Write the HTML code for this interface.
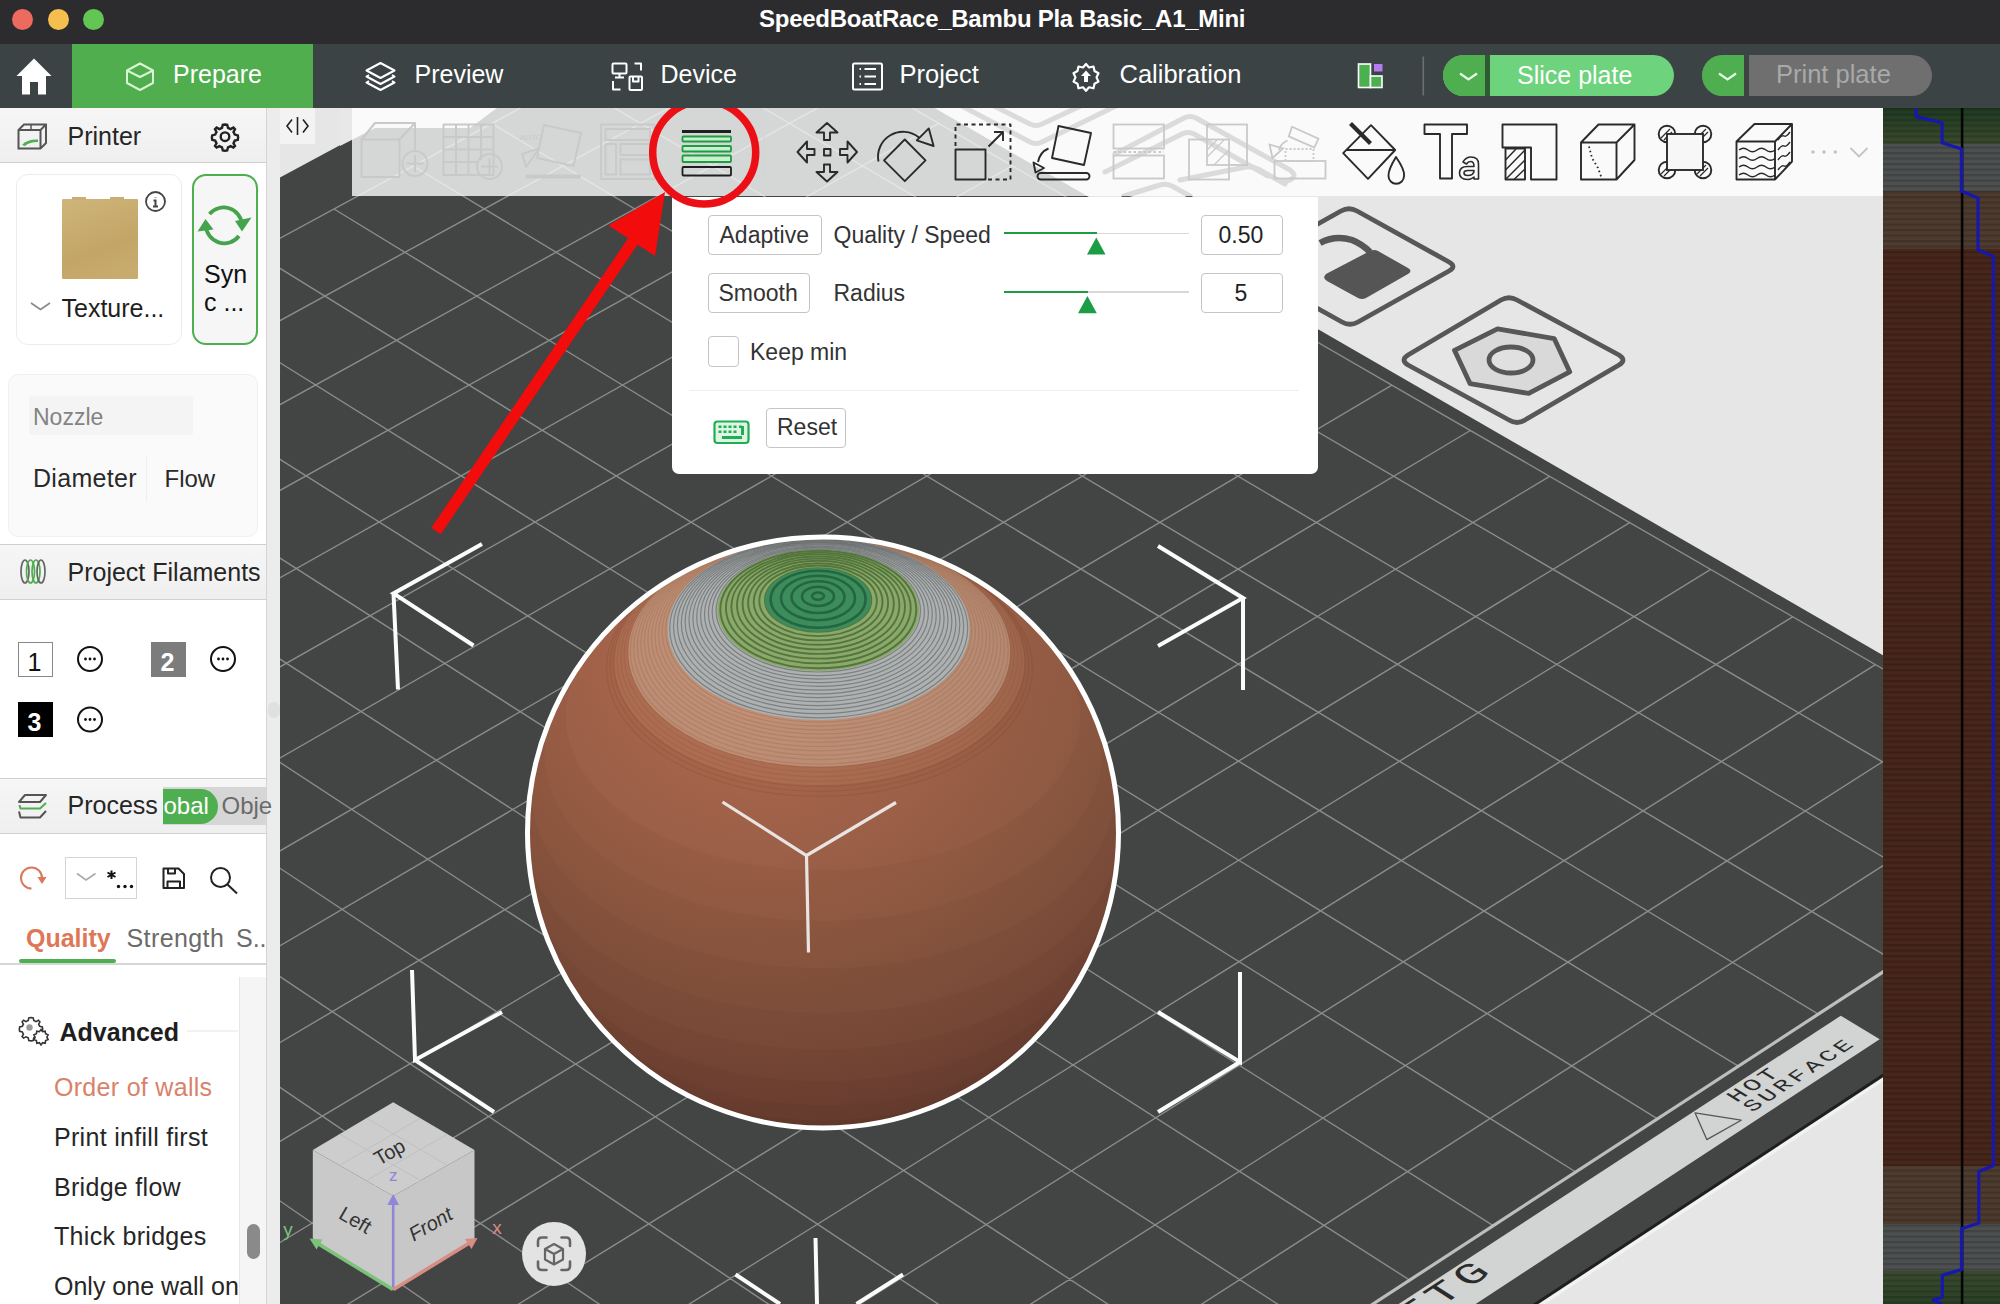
<!DOCTYPE html>
<html><head><meta charset="utf-8"><style>
*{box-sizing:border-box;margin:0;padding:0}
html,body{width:2000px;height:1304px;overflow:hidden;background:#e6e6e6;font-family:"Liberation Sans", sans-serif}
.a{position:absolute}
.t{position:absolute;white-space:nowrap;line-height:1}
svg{overflow:visible}
</style></head><body>

<svg class="a" style="left:0;top:0" width="2000" height="1304" viewBox="0 0 2000 1304">
<defs><clipPath id="vp"><rect x="280" y="108" width="1603" height="1196"/></clipPath></defs>
<g clip-path="url(#vp)">
<rect x="280" y="108" width="1603" height="1196" fill="#e6e6e6"/>
<polygon points="681.0,-38.3 2223.3,851.5 602.6,1917.9 -914.5,820.2" fill="#434444"/>
<path d="M722.6 -1.6L2129.6 811.5M646.3 39.7L2053.0 861.4M569.4 81.4L1975.6 911.7M491.7 123.5L1897.4 962.7M413.2 166.0L1818.3 1014.1M334.0 209.0L1738.3 1066.2M254.0 252.3L1657.5 1118.8M173.2 296.1L1575.8 1172.0M91.5 340.3L1493.2 1225.7M9.1 385.0L1409.7 1280.1M-74.1 430.1L1325.3 1335.0M-158.2 475.7L1239.9 1390.6M-243.2 521.7L1153.6 1446.8M-329.0 568.2L1066.2 1503.7M-415.7 615.2L977.9 1561.2M-503.3 662.6L888.6 1619.3M-591.8 710.6L798.2 1678.1M-681.3 759.0L706.8 1737.6M-771.6 808.0L614.4 1797.8M722.6 -1.6L-771.6 808.0M793.9 39.6L-702.0 857.7M865.9 81.2L-631.7 908.0M938.7 123.3L-560.5 958.8M1012.2 165.8L-488.5 1010.2M1086.5 208.7L-415.7 1062.2M1161.7 252.2L-342.0 1114.8M1237.6 296.0L-267.4 1168.1M1314.3 340.4L-192.0 1222.0M1391.9 385.2L-115.7 1276.5M1470.3 430.5L-38.4 1331.6M1549.6 476.3L39.7 1387.5M1629.7 522.6L118.8 1443.9M1710.7 569.4L198.9 1501.1M1792.6 616.8L280.0 1559.0M1875.4 664.6L362.0 1617.6M1959.2 713.0L445.1 1676.9M2043.9 762.0L529.2 1737.0" stroke="#8a8b8b" stroke-width="1.4" fill="none"/>
<path d="M2129.6 811.5L614.4 1797.8" stroke="#bdbdbd" stroke-width="3.2"/>
<polygon points="1840.8,1015.7 1879.7,1039.2 940.3,1654.9 901.5,1628.2" fill="#d2d3d3"/>
<g transform="matrix(0.8069,-0.5272,0.8653,0.5304,1736.53,1102.72)"><text x="0" y="0" font-family="Liberation Mono" font-size="21" letter-spacing="2.6" fill="#2b2b2b" transform="scale(1.25,1)">HOT</text></g><g transform="matrix(0.8069,-0.5283,0.8672,0.5316,1752.30,1112.49)"><text x="0" y="0" font-family="Liberation Mono" font-size="20" letter-spacing="2.9" fill="#2b2b2b" transform="scale(1.25,1)">SURFACE</text></g><g transform="matrix(0.8465,-0.5536,0.8658,0.5579,1386.16,1342.41)"><text x="0" y="0" font-family="Liberation Mono" font-size="36" letter-spacing="4.6" fill="#2b2b2b" transform="scale(1.25,1)">PETG</text></g><polygon points="1695.0,1112.8 1706.8,1139.6 1741.2,1120.2" fill="none" stroke="#555" stroke-width="1.3" stroke-linejoin="round"/>
<path d="M2225.5 852.8L604.8 1919.5" stroke="#f2f2f2" stroke-width="5.5"/>
<path d="M2223.3 851.5L602.6 1917.9" stroke="#1e1f1f" stroke-width="3"/>

<defs>
 <radialGradient id="sg" cx="760" cy="640" r="560" gradientUnits="userSpaceOnUse">
  <stop offset="0" stop-color="#b56c4f"/>
  <stop offset="0.35" stop-color="#9e6048"/>
  <stop offset="0.7" stop-color="#87563f"/>
  <stop offset="1" stop-color="#6e4839"/>
 </radialGradient>
 <clipPath id="sc"><circle cx="823" cy="832.5" r="295.5"/></clipPath>
</defs>
<circle cx="823" cy="832.5" r="295.5" fill="url(#sg)"/>
<g clip-path="url(#sc)">
<path d="M1055.9 650.6 A257.2 154.3 0 1 1 590.1 650.6 A295.5 295.5 0 1 0 1055.9 650.6 Z" fill="rgba(40,15,5,0.032)"/><path d="M1091.5 709.2 A278.6 167.1 0 1 1 554.5 709.2 A295.5 295.5 0 1 0 1091.5 709.2 Z" fill="rgba(40,15,5,0.032)"/><path d="M1112.1 771.5 A291.4 174.9 0 1 1 533.9 771.5 A295.5 295.5 0 1 0 1112.1 771.5 Z" fill="rgba(40,15,5,0.032)"/><path d="M1118.5 835.7 A295.5 177.3 0 0 1 527.5 835.7 A295.5 295.5 0 0 0 1118.5 835.7 Z" fill="rgba(40,15,5,0.032)"/><path d="M1110.7 899.8 A290.6 174.3 0 0 1 535.3 899.8 A295.5 295.5 0 0 0 1110.7 899.8 Z" fill="rgba(40,15,5,0.032)"/><path d="M1088.7 961.9 A276.8 166.1 0 0 1 557.3 961.9 A295.5 295.5 0 0 0 1088.7 961.9 Z" fill="rgba(40,15,5,0.032)"/><path d="M1051.4 1020.0 A254.6 152.8 0 0 1 594.6 1020.0 A295.5 295.5 0 0 0 1051.4 1020.0 Z" fill="rgba(40,15,5,0.032)"/><path d="M995.5 1072.4 A224.7 134.8 0 0 1 650.5 1072.4 A295.5 295.5 0 0 0 995.5 1072.4 Z" fill="rgba(40,15,5,0.032)"/><path d="M901.0 1117.5 A188.0 112.8 0 0 1 745.0 1117.5 A295.5 295.5 0 0 0 901.0 1117.5 Z" fill="rgba(40,15,5,0.032)"/>
<ellipse cx="819.5" cy="668.6" rx="213.0" ry="127.8" fill="none" stroke="rgba(120,70,45,0.22)" stroke-width="1.2"/><ellipse cx="819.5" cy="665.7" rx="209.4" ry="125.6" fill="none" stroke="rgba(120,70,45,0.22)" stroke-width="1.2"/><ellipse cx="819.4" cy="662.9" rx="205.8" ry="123.5" fill="none" stroke="rgba(120,70,45,0.22)" stroke-width="1.2"/><ellipse cx="819.4" cy="660.1" rx="202.2" ry="121.3" fill="none" stroke="rgba(120,70,45,0.22)" stroke-width="1.2"/><ellipse cx="819.3" cy="657.5" rx="198.6" ry="119.2" fill="none" stroke="rgba(120,70,45,0.22)" stroke-width="1.2"/><ellipse cx="819.2" cy="654.9" rx="195.0" ry="117.0" fill="none" stroke="rgba(120,70,45,0.22)" stroke-width="1.2"/><ellipse cx="819.2" cy="652.4" rx="191.4" ry="114.8" fill="none" stroke="rgba(120,70,45,0.22)" stroke-width="1.2"/>
<ellipse cx="819.4" cy="662.2" rx="205.0" ry="123.0" fill="rgba(220,170,130,0.12)"/><ellipse cx="819.2" cy="652.1" rx="191.0" ry="114.6" fill="rgba(215,200,180,0.36)"/><ellipse cx="819.2" cy="650.8" rx="189.0" ry="113.4" fill="none" stroke="rgba(150,100,70,0.3)" stroke-width="1.3"/><ellipse cx="819.1" cy="648.4" rx="185.4" ry="111.2" fill="none" stroke="rgba(150,100,70,0.3)" stroke-width="1.3"/><ellipse cx="819.1" cy="646.1" rx="181.8" ry="109.1" fill="none" stroke="rgba(150,100,70,0.3)" stroke-width="1.3"/><ellipse cx="819.0" cy="643.9" rx="178.2" ry="106.9" fill="none" stroke="rgba(150,100,70,0.3)" stroke-width="1.3"/><ellipse cx="819.0" cy="641.8" rx="174.6" ry="104.8" fill="none" stroke="rgba(150,100,70,0.3)" stroke-width="1.3"/><ellipse cx="818.9" cy="639.7" rx="171.0" ry="102.6" fill="none" stroke="rgba(150,100,70,0.3)" stroke-width="1.3"/><ellipse cx="818.9" cy="637.7" rx="167.4" ry="100.4" fill="none" stroke="rgba(150,100,70,0.3)" stroke-width="1.3"/><ellipse cx="818.8" cy="635.7" rx="163.8" ry="98.3" fill="none" stroke="rgba(150,100,70,0.3)" stroke-width="1.3"/><ellipse cx="818.8" cy="633.9" rx="160.2" ry="96.1" fill="none" stroke="rgba(150,100,70,0.3)" stroke-width="1.3"/><ellipse cx="818.8" cy="632.0" rx="156.6" ry="94.0" fill="none" stroke="rgba(150,100,70,0.3)" stroke-width="1.3"/><ellipse cx="818.7" cy="630.3" rx="153.0" ry="91.8" fill="none" stroke="rgba(150,100,70,0.3)" stroke-width="1.3"/><ellipse cx="818.7" cy="629.3" rx="151.0" ry="90.6" fill="#aeb1b1"/><ellipse cx="818.7" cy="628.4" rx="149.0" ry="89.4" fill="none" stroke="rgba(90,95,95,0.6)" stroke-width="1.2"/><ellipse cx="818.6" cy="626.6" rx="145.1" ry="87.1" fill="none" stroke="rgba(90,95,95,0.6)" stroke-width="1.2"/><ellipse cx="818.6" cy="624.8" rx="141.2" ry="84.7" fill="none" stroke="rgba(90,95,95,0.6)" stroke-width="1.2"/><ellipse cx="818.6" cy="623.2" rx="137.3" ry="82.4" fill="none" stroke="rgba(90,95,95,0.6)" stroke-width="1.2"/><ellipse cx="818.5" cy="621.6" rx="133.4" ry="80.0" fill="none" stroke="rgba(90,95,95,0.6)" stroke-width="1.2"/><ellipse cx="818.5" cy="620.0" rx="129.5" ry="77.7" fill="none" stroke="rgba(90,95,95,0.6)" stroke-width="1.2"/><ellipse cx="818.5" cy="618.5" rx="125.6" ry="75.4" fill="none" stroke="rgba(90,95,95,0.6)" stroke-width="1.2"/><ellipse cx="818.4" cy="617.1" rx="121.7" ry="73.0" fill="none" stroke="rgba(90,95,95,0.6)" stroke-width="1.2"/><ellipse cx="818.4" cy="615.7" rx="117.8" ry="70.7" fill="none" stroke="rgba(90,95,95,0.6)" stroke-width="1.2"/><ellipse cx="818.4" cy="614.4" rx="113.9" ry="68.3" fill="none" stroke="rgba(90,95,95,0.6)" stroke-width="1.2"/><ellipse cx="818.4" cy="613.1" rx="110.0" ry="66.0" fill="none" stroke="rgba(90,95,95,0.6)" stroke-width="1.2"/><ellipse cx="818.3" cy="611.9" rx="106.1" ry="63.7" fill="none" stroke="rgba(90,95,95,0.6)" stroke-width="1.2"/><ellipse cx="818.3" cy="610.7" rx="102.2" ry="61.3" fill="none" stroke="rgba(90,95,95,0.6)" stroke-width="1.2"/><ellipse cx="818.3" cy="610.3" rx="101.0" ry="60.6" fill="#8aa96a"/><ellipse cx="818.3" cy="609.5" rx="98.0" ry="58.8" fill="none" stroke="rgba(70,105,50,0.8)" stroke-width="1.9"/><ellipse cx="818.3" cy="608.0" rx="92.4" ry="55.4" fill="none" stroke="rgba(70,105,50,0.8)" stroke-width="1.9"/><ellipse cx="818.2" cy="606.5" rx="86.8" ry="52.1" fill="none" stroke="rgba(70,105,50,0.8)" stroke-width="1.9"/><ellipse cx="818.2" cy="605.2" rx="81.2" ry="48.7" fill="none" stroke="rgba(70,105,50,0.8)" stroke-width="1.9"/><ellipse cx="818.2" cy="604.0" rx="75.6" ry="45.4" fill="none" stroke="rgba(70,105,50,0.8)" stroke-width="1.9"/><ellipse cx="818.1" cy="602.8" rx="70.0" ry="42.0" fill="none" stroke="rgba(70,105,50,0.8)" stroke-width="1.9"/><ellipse cx="818.1" cy="601.8" rx="64.4" ry="38.6" fill="none" stroke="rgba(70,105,50,0.8)" stroke-width="1.9"/><ellipse cx="818.1" cy="600.8" rx="58.8" ry="35.3" fill="none" stroke="rgba(70,105,50,0.8)" stroke-width="1.9"/><ellipse cx="818.1" cy="600.0" rx="53.2" ry="31.9" fill="none" stroke="rgba(70,105,50,0.8)" stroke-width="1.9"/><ellipse cx="818.1" cy="599.9" rx="53.0" ry="31.8" fill="#3d8d5c"/><ellipse cx="818.1" cy="599.2" rx="47.5" ry="28.5" fill="none" stroke="rgba(30,95,60,0.85)" stroke-width="2.6"/><ellipse cx="818.0" cy="598.0" rx="37.0" ry="22.2" fill="none" stroke="rgba(30,95,60,0.85)" stroke-width="2.6"/><ellipse cx="818.0" cy="597.1" rx="26.5" ry="15.9" fill="none" stroke="rgba(30,95,60,0.85)" stroke-width="2.6"/><ellipse cx="818.0" cy="596.4" rx="16.0" ry="9.6" fill="none" stroke="rgba(30,95,60,0.85)" stroke-width="2.6"/><ellipse cx="818.0" cy="596.1" rx="6.0" ry="3.6" fill="none" stroke="rgba(30,95,60,0.85)" stroke-width="2.6"/>
</g>
<circle cx="823" cy="832.5" r="295.5" fill="none" stroke="#fff" stroke-width="5"/>


<g fill="none" stroke="#575757" stroke-width="4.8" stroke-linejoin="round">
 <path d="M1341 211 Q1349 206.5 1357 211 L1449 262 Q1457 266.5 1449 271 L1358 322 Q1350 326.5 1342 322 L1250 271 Q1242 266.5 1250 262 Z"/>
 <path d="M1405 300 Q1513 296 1513 296 Q1517 294 1521 296 L1619 354 Q1627 359 1619 364 L1525 420 Q1517 425 1509 420 L1408 365 Q1400 360 1408 355 L1501 300 Q1509 295.5 1517 300" stroke="none"/>
 <path d="M1501 300 Q1509 295.5 1517 300 L1619 355 Q1627 360 1619 365 L1525 420 Q1517 425 1509 420 L1408 365 Q1400 360 1408 355 Z"/>
 <path d="M1454.5 350.3 L1497.5 328.8 L1554.2 338.6 L1569.8 371.9 L1528.7 393.4 L1470 383.6 Z" fill="#d9d9d9"/>
 <ellipse cx="1511" cy="360" rx="22" ry="13" fill="#e0e0e0"/>
 <path d="M1320 243 Q1335 235 1352 240 Q1362 244 1370 252" stroke-width="6.5"/>
</g>
<path d="M1326 274 L1370 251 Q1374 249 1378 251 L1408 268 Q1413 271 1408 274 L1366 298 Q1362 300 1358 298 L1327 281 Q1322 278 1326 274 Z" fill="#555"/>
<g fill="none" stroke="#5a5a5a" stroke-width="5" stroke-linejoin="round" stroke-linecap="round">
 <path d="M958 104 L1030 142 Q1036 145 1042 142 L1120 104"/>
 <path d="M990 104 L1030 124 Q1036 127 1042 124 L1085 104"/>
 <path d="M1115 154 L1184 118 Q1190 115 1196 118 L1290 170 Q1298 176 1290 180 L1282 182"/>
 <path d="M1105 172 L1182 134 Q1188 131 1194 134 L1268 176"/>
 <path d="M1180 180 L1246 167 Q1252 166 1258 169 L1285 184"/>
 <path d="M1124 196 L1160 185 Q1166 183 1172 186 L1190 196"/>
 <path d="M1142 104 L1190 104"/>
</g>
<path d="M340 108 L497 108 L470 128 L375 128 L340 146 Z" fill="#e8e8e8"/>


<g stroke="#fbfbfb" stroke-width="4" fill="none" stroke-linecap="butt">
 <path d="M482 544 L393.5 593.5 L473.5 645.5 M393.5 593.5 L398 689.5"/>
 <path d="M1158 546 L1243 598 L1158 646 M1243 598 L1243 690"/>
 <path d="M412 970 L415 1060 L502 1012 M415 1060 L494 1112"/>
 <path d="M1240 972 L1240 1062 L1158 1012 M1240 1062 L1158 1112"/>
 <path d="M815.5 1238 L817 1304 M735.5 1274.5 L780 1304 M903 1274.5 L856.5 1304"/>
</g>
<path d="M722.5 802 L806.5 855.5 L896 802.5 M806.5 855.5 L808.5 952.5" stroke="#e9e4e2" stroke-width="3.2" fill="none"/>

</g>
</svg>


<div class="a" style="left:352px;top:108px;width:1531px;height:88px;background:rgba(255,255,255,0.78)"></div>
<div class="a" style="left:280px;top:108px;width:35px;height:36px;background:#f3f3f3"></div>
<svg class="a" style="left:0;top:0" width="2000" height="200">
 <path d="M297.5 117 V135" stroke="#222" stroke-width="1.6"/>
 <path d="M292 119.5 L287 126 L292 132.5 M303 119.5 L308 126 L303 132.5" fill="none" stroke="#222" stroke-width="1.6"/>
 <g fill="none" stroke="#c9c9c9" stroke-width="2" stroke-linejoin="round">
  <path d="M361.5 139.5 H399.5 V177 H361.5 Z M361.5 139.5 L375 123 H415 L399.5 139.5 M415 123 V151"/>
  <circle cx="415" cy="163.5" r="12.5"/><path d="M415 155 V172 M406.5 163.5 H423.5"/>
  <path d="M443.5 124.5 H493.5 V175 H443.5 Z M456 124.5 V175 M468.5 124.5 V175 M481 124.5 V160 M443.5 137 H493.5 M443.5 149.5 H493.5 M443.5 162 H478"/>
  <circle cx="489.5" cy="166.5" r="12.5"/><path d="M489.5 158 V175 M481 166.5 H498"/>
  <path d="M544 125 L581 133 L573.5 166 L537 158 Z"/><path d="M527.5 176.5 H579" stroke-width="4" stroke-linecap="round"/>
  <path d="M522 154 L539 148.5 L526 167 Z"/>
  <path d="M601 124.5 H654.5 V179 H601 Z M605.5 129 H650 V140 H605.5 Z M605.5 144 H616 V174.5 H605.5 Z M620.5 144 H650 V155 H620.5 Z M620.5 159.5 H650 V174.5 H620.5 Z" stroke-width="1.8"/>
 </g>
 <text x="520" y="140" font-size="8" fill="#c9c9c9" font-family="Liberation Sans">AUTO</text>
 <path d="M682 131.5 H731" stroke="#1f1f1f" stroke-width="3.2"/>
 <g fill="#c8f0cc" stroke="#1c9c43" stroke-width="1.8">
  <rect x="682.5" y="136.5" width="48.5" height="5" rx="1"/>
  <rect x="682.5" y="146" width="48.5" height="5.5" rx="1"/>
  <rect x="682.5" y="155.5" width="48.5" height="6.5" rx="1"/>
 </g>
 <rect x="682.5" y="167" width="48.5" height="8.5" rx="1" fill="none" stroke="#1f1f1f" stroke-width="1.8"/>
 <path d="M764.5 130 V176" stroke="#d4d4d4" stroke-width="1.2"/>
 <g fill="none" stroke="#2a2a2a" stroke-width="1.9" stroke-linejoin="round">
  <path d="M827 123 L837.5 132.5 H830 V140 H824 V132.5 H816.5 Z"/>
  <path d="M827 181.5 L837.5 172 H830 V164.5 H824 V172 H816.5 Z"/>
  <path d="M797.5 152 L807 141.5 V149 H814.5 V155 H807 V162.5 Z"/>
  <path d="M857 152 L847.5 141.5 V149 H840 V155 H847.5 V162.5 Z"/>
  <rect x="824" y="149" width="6.5" height="6.5"/>
  <path d="M904.8 139.5 L925.5 160.4 L904.8 181.2 L884 160.4 Z"/>
  <path d="M878.5 161.5 A 25 25 0 0 1 919 137.5"/>
  <path d="M916.8 140.4 L928.8 128.4 L933.6 146 Z"/>
  <path d="M955.5 149.5 H985.5 V179.5 H955.5 Z"/>
  <path d="M955.5 146 V124.5 H1010.5 V179.5 H988" stroke-dasharray="4 3.5"/>
  <path d="M988.5 146.5 L1002.5 132.5 M994 132 H1003 V141"/>
  <path d="M1058.5 126 L1091 133 L1084 165 L1052 158 Z"/>
  <path d="M1048.5 148.5 Q1040 152 1038 162"/>
  <path d="M1033.5 162.5 L1044 168 L1035.5 172.5 Z"/>
  <rect x="1037.5" y="173" width="52" height="6.5" rx="3.2"/>
 </g>
 <g fill="none" stroke="#c9c9c9" stroke-width="1.8">
  <rect x="1113.5" y="124.5" width="50.5" height="24"/><rect x="1113.5" y="155.5" width="50.5" height="23"/>
  <path d="M1113.5 152 H1164" stroke-dasharray="2.5 2.5"/>
  <rect x="1189" y="139.5" width="40" height="40"/><rect x="1207" y="124.5" width="40" height="40.5"/>
  <path d="M1207 157 L1224 140 M1207 150 L1217 140 M1214 165 L1229 150" stroke-width="1.2"/>
  <rect x="1274.5" y="161" width="51" height="17.5"/><rect x="1285.5" y="149" width="28" height="12" stroke-dasharray="2 2"/>
  <path d="M1292 126.8 L1318.4 138.8 L1314.4 147.6 L1288.8 136.4 Z"/>
  <path d="M1287.5 140.5 Q1280 144 1279 150"/><path d="M1269.5 144.5 L1283 148.5 L1272.5 158 Z"/>
 </g>
 <g fill="none" stroke="#2a2a2a" stroke-width="1.9" stroke-linejoin="round">
  <path d="M1371 125.2 L1395.2 150 L1368 178.8 L1343.2 153.2 Z M1346 150 H1395.2"/>
  <path d="M1396 157 Q1405 170 1404 176 A 7.5 7.5 0 0 1 1388.5 176 Q1388 170 1396 157 Z"/>
 </g>
 <path d="M1350.5 123.5 L1370.5 143.5" stroke="#2a2a2a" stroke-width="4.2"/>
 <g fill="none" stroke="#2a2a2a" stroke-width="1.9" stroke-linejoin="round">
  <path d="M1424.5 124.5 H1467 V134 H1452 V178.5 H1440 V134 H1424.5 Z"/>
  <path d="M1463 162 Q1466 157 1471 157 Q1478.5 157 1478.5 164 V179 H1474 V177 Q1471 179.5 1467.5 179.5 Q1459.5 179.5 1459.5 173 Q1459.5 166.5 1467.5 166.5 H1474 Q1474 161.5 1470.5 161.5 Q1468 161.5 1466.5 164 Z M1474 170.5 H1468 Q1464 170.5 1464 173 Q1464 175.5 1467.5 175.5 Q1474 175.5 1474 170.5 Z" stroke-width="1.6"/>
  <path d="M1502.5 124.5 H1556.5 V179.5 H1531 V147.5 H1502.5 Z"/>
  <rect x="1505.5" y="148.5" width="19.5" height="31" />
  <path d="M1505.5 160 L1516 149 M1505.5 170 L1525 150 M1505.5 179.5 L1525 160 M1514 179.5 L1525 169" stroke-width="1.5"/>
  <path d="M1581 142.5 H1616.5 V179.5 H1581 Z M1581 142.5 L1598.5 124.5 H1634.5 L1616.5 142.5 M1634.5 124.5 V160 L1616.5 179.5"/>
 </g>
 <path d="M1589 146.5 L1592 158 L1598 168 L1602 179" stroke="#2a2a2a" stroke-width="1.8" stroke-dasharray="1.6 2.8" fill="none"/>
 <g fill="none" stroke="#2a2a2a" stroke-width="1.9">
  <circle cx="1667" cy="134" r="8.3"/><circle cx="1703" cy="134" r="8.3"/><circle cx="1667" cy="170" r="8.3"/><circle cx="1703" cy="170" r="8.3"/>
 </g>
 <g stroke="#2a2a2a" stroke-width="1.2">
  <path d="M1661 138 L1670 129 M1664 140 L1672 132 M1697 138 L1706 129 M1700 140 L1708 132 M1661 174 L1670 165 M1664 176 L1672 168 M1697 174 L1706 165 M1700 176 L1708 168"/>
 </g>
 <rect x="1667" y="134" width="36" height="36" fill="#f7f7f7" stroke="#2a2a2a" stroke-width="1.9"/>
 <g fill="none" stroke="#2a2a2a" stroke-width="1.9" stroke-linejoin="round">
  <path d="M1736.5 141.5 H1775 V179.5 H1736.5 Z M1736.5 141.5 L1754.5 124 H1792 L1775 141.5 M1792 124 V161.5 L1775 179.5"/>
 </g>
 <g fill="none" stroke="#2a2a2a" stroke-width="1.4">
  <path d="M1739 150 q4.5 -3.5 9 0 t9 0 t9 0 t9 0 M1739 158.5 q4.5 -3.5 9 0 t9 0 t9 0 t9 0 M1739 167 q4.5 -3.5 9 0 t9 0 t9 0 t9 0 M1739 175 q4.5 -3.5 9 0 t9 0 t9 0 t9 0"/>
  <path d="M1778 140 q4 -5.5 6 -4 t 6 -4 M1778 150 q4 -5.5 6 -4 t 6 -4 M1778 160 q4 -5.5 6 -4 t 6 -4 M1778 170 q4 -5.5 6 -4 t 6 -4"/>
 </g>
 <g fill="#c4c4c4"><circle cx="1813" cy="152" r="1.8"/><circle cx="1824" cy="152" r="1.8"/><circle cx="1835.3" cy="152" r="1.8"/></g>
 <path d="M1850.5 148 L1859 156.5 L1867.5 148" fill="none" stroke="#c4c4c4" stroke-width="1.8"/>
</svg>


<div class="a" style="left:672px;top:197px;width:646px;height:277px;background:#fff;border-radius:0 0 7px 7px"></div>
<div class="a" style="left:707.5px;top:214.5px;width:114px;height:40px;border:1.6px solid #c4c4c4;border-radius:4px"></div>
<div class="t" style="left:719.5px;top:223.5px;font-size:23px;color:#333;font-weight:normal;">Adaptive</div>
<div class="t" style="left:833.5px;top:223.5px;font-size:23px;color:#333;font-weight:normal;">Quality / Speed</div>
<div class="a" style="left:1003.5px;top:232.5px;width:185.5px;height:1.6px;background:#d8d8d8"></div>
<div class="a" style="left:1003.5px;top:232px;width:93px;height:2.2px;background:#1c9c43"></div>
<div class="a" style="left:1200.5px;top:214.5px;width:82px;height:40px;border:1.6px solid #c4c4c4;border-radius:4px"></div>
<div class="t" style="left:1218.5px;top:223.5px;font-size:23px;color:#222;font-weight:normal;">0.50</div>
<div class="a" style="left:707.5px;top:273px;width:102px;height:40px;border:1.6px solid #c4c4c4;border-radius:4px"></div>
<div class="t" style="left:718.5px;top:282.0px;font-size:23px;color:#333;font-weight:normal;">Smooth</div>
<div class="t" style="left:833.5px;top:282.0px;font-size:23px;color:#333;font-weight:normal;">Radius</div>
<div class="a" style="left:1003.5px;top:291.3px;width:185.5px;height:1.6px;background:#d8d8d8"></div>
<div class="a" style="left:1003.5px;top:290.8px;width:84px;height:2.2px;background:#1c9c43"></div>
<div class="a" style="left:1200.5px;top:273px;width:82px;height:40px;border:1.6px solid #c4c4c4;border-radius:4px"></div>
<div class="t" style="left:1234.5px;top:282.0px;font-size:23px;color:#222;font-weight:normal;">5</div>
<div class="a" style="left:707.5px;top:335.5px;width:31.5px;height:31px;border:1.6px solid #c4c4c4;border-radius:4px"></div>
<div class="t" style="left:750px;top:340.5px;font-size:23px;color:#333;font-weight:normal;">Keep min</div>
<div class="a" style="left:689px;top:390px;width:610px;height:1.2px;background:#efefef"></div>
<div class="a" style="left:766px;top:407.5px;width:80px;height:40px;border:1.6px solid #c4c4c4;border-radius:4px"></div>
<div class="t" style="left:777px;top:416.0px;font-size:23px;color:#333;font-weight:normal;">Reset</div>
<svg class="a" style="left:0;top:0" width="2000" height="500">
 <path d="M1096.3 237.5 L1105.5 254.5 L1087 254.5 Z" fill="#1a9d45"/>
 <path d="M1087.4 296 L1096.8 313.3 L1078 313.3 Z" fill="#1a9d45"/>
 <rect x="714.5" y="421.5" width="34" height="21.5" rx="3" fill="#dff5e4" stroke="#1fae55" stroke-width="2.2"/>
 <g fill="#1fae55"><rect x="718.5" y="425.5" width="3" height="2.5"/><rect x="723.5" y="425.5" width="3" height="2.5"/><rect x="728.5" y="425.5" width="3" height="2.5"/><rect x="733.5" y="425.5" width="3" height="2.5"/><rect x="739" y="425.5" width="3" height="2.5"/>
 <rect x="718.5" y="430.5" width="3" height="2.5"/><rect x="723.5" y="430.5" width="3" height="2.5"/><rect x="728.5" y="430.5" width="3" height="2.5"/><rect x="733.5" y="430.5" width="3" height="2.5"/><rect x="741" y="426" width="3" height="9"/>
 <rect x="722" y="436" width="20" height="3"/></g>
</svg>


<svg class="a" style="left:0;top:0" width="2000" height="1304">
 <circle cx="704.2" cy="152.5" r="51.5" fill="none" stroke="#ec1016" stroke-width="7.5"/>
 <path d="M436 531 L640 231" stroke="#f20c0c" stroke-width="11.5" fill="none"/>
 <path d="M665 192 L608.5 225.5 L655 256 Z" fill="#f20c0c"/>
</svg>


<svg class="a" style="left:0;top:0" width="2000" height="1304">
 <defs><linearGradient id="bg0" x1="0" y1="0" x2="0" y2="1"><stop offset="0" stop-color="#1f3a22"/><stop offset="1" stop-color="#3b4a2e"/></linearGradient><linearGradient id="bg1" x1="0" y1="0" x2="0" y2="1"><stop offset="0" stop-color="#4d5050"/><stop offset="1" stop-color="#4d5050"/></linearGradient><linearGradient id="bg2" x1="0" y1="0" x2="0" y2="1"><stop offset="0" stop-color="#4c3a2d"/><stop offset="1" stop-color="#4e3c30"/></linearGradient><linearGradient id="bg3" x1="0" y1="0" x2="0" y2="1"><stop offset="0" stop-color="#47261b"/><stop offset="1" stop-color="#47261b"/></linearGradient><linearGradient id="bg4" x1="0" y1="0" x2="0" y2="1"><stop offset="0" stop-color="#4e3c30"/><stop offset="1" stop-color="#4c3a2d"/></linearGradient><linearGradient id="bg5" x1="0" y1="0" x2="0" y2="1"><stop offset="0" stop-color="#4d5050"/><stop offset="1" stop-color="#4d5050"/></linearGradient><linearGradient id="bg6" x1="0" y1="0" x2="0" y2="1"><stop offset="0" stop-color="#3a4a2e"/><stop offset="1" stop-color="#2a4026"/></linearGradient>
  <pattern id="stripes" x="0" y="108" width="10" height="5.5" patternUnits="userSpaceOnUse"><rect x="0" y="0" width="10" height="2.2" fill="rgba(0,0,0,0.16)"/></pattern>
 </defs>
 <rect x="1883" y="108" width="117" height="36" fill="url(#bg0)"/><rect x="1883" y="144" width="117" height="47" fill="url(#bg1)"/><rect x="1883" y="191" width="117" height="58" fill="url(#bg2)"/><rect x="1883" y="249" width="117" height="917" fill="url(#bg3)"/><rect x="1883" y="1166" width="117" height="58" fill="url(#bg4)"/><rect x="1883" y="1224" width="117" height="47" fill="url(#bg5)"/><rect x="1883" y="1271" width="117" height="33" fill="url(#bg6)"/>
 <rect x="1883" y="108" width="117" height="1196" fill="url(#stripes)"/>
 <rect x="1960.8" y="108" width="2.6" height="1196" fill="#050505"/>
 <path d="M1916.2 108 V116.6 L1942.1 122.8 V142.8 L1961.4 149 V191 L1978 198 V249.7 L1993.3 256.6 V1165.8 L1978.8 1171.4 V1223 L1961.5 1228.7 V1269.6 L1942.3 1275.2 V1297.3 L1933 1300 L1942 1304" fill="none" stroke="#1717b0" stroke-width="3.2" stroke-linejoin="round"/>
</svg>


<svg class="a" style="left:0;top:0" width="2000" height="1304">
 <polygon points="393.2,1102.3 474.5,1149.9 393.2,1196 312.8,1149.9" fill="#cdcdcd"/>
 <polygon points="312.8,1149.9 393.2,1196 393.2,1290.2 312.8,1238.5" fill="#c9c9c9"/>
 <polygon points="474.5,1149.9 393.2,1196 393.2,1290.2 474.5,1238.5" fill="#c7c7c7"/>
 <g stroke="#bdbdbd" stroke-width="0.8" fill="none">
  <path d="M366.4 1118.2 L447.7 1165.3 M339.6 1134.1 L420.9 1180.6 M420.3 1118.2 L339.6 1165.3 M447.4 1134.1 L366.4 1180.6"/>
 </g>
 <text transform="translate(393,1158) rotate(-30)" text-anchor="middle" font-size="20" fill="#333" font-family="Liberation Sans">Top</text>
 <text transform="translate(352,1226) rotate(30)" text-anchor="middle" font-size="20" fill="#333" font-family="Liberation Sans">Left</text>
 <text transform="translate(434,1230) rotate(-30)" text-anchor="middle" font-size="20" font-style="italic" fill="#333" font-family="Liberation Sans">Front</text>
 <text x="393.2" y="1181" text-anchor="middle" font-size="17" fill="#8f86d8" font-family="Liberation Sans">z</text>
 <path d="M393.2 1289.5 V1203" stroke="#8f86d8" stroke-width="2.6"/>
 <path d="M393.2 1194 L399 1205 H387.4 Z" fill="#8f86d8"/>
 <path d="M393 1289.5 L316 1242.5" stroke="#7cc37a" stroke-width="3.5"/>
 <path d="M309.5 1238.5 L322.5 1239.5 L316.5 1249.5 Z" fill="#7cc37a"/>
 <path d="M393.5 1289.5 L471 1242" stroke="#d98c84" stroke-width="3.5"/>
 <path d="M477.5 1238 L471.5 1249 L465 1239 Z" fill="#d98c84"/>
 <text x="288" y="1236" text-anchor="middle" font-size="19" fill="#7cc37a" font-family="Liberation Sans">y</text>
 <text x="497" y="1234" text-anchor="middle" font-size="19" fill="#d98c84" font-family="Liberation Sans">x</text>
 <circle cx="554" cy="1254" r="32" fill="#e3e3e3"/>
 <g fill="none" stroke="#666" stroke-width="2.6" stroke-linecap="round">
  <path d="M538 1246 V1241.5 Q538 1237.5 542 1237.5 H546.5 M561.5 1237.5 H566 Q570 1237.5 570 1241.5 V1246 M570 1261.5 V1266 Q570 1270 566 1270 H561.5 M546.5 1270 H542 Q538 1270 538 1266 V1261.5"/>
 </g>
 <g fill="none" stroke="#666" stroke-width="2.2" stroke-linejoin="round">
  <path d="M554 1244 L563 1249 V1259.5 L554 1264.5 L545 1259.5 V1249 Z M545 1249 L554 1254 L563 1249 M554 1254 V1264.5"/>
 </g>
</svg>


<div class="a" style="left:0;top:108px;width:266px;height:1196px;background:#fff"></div>
<div class="a" style="left:265.5px;top:108px;width:14.5px;height:1196px;background:#ececec;border-left:1.5px solid #d4d4d4"></div>
<div class="a" style="left:268px;top:702px;width:12px;height:16px;border-radius:6px;background:#e0e0e0"></div>
<!-- printer header -->
<div class="a" style="left:0;top:108px;width:265.5px;height:55px;background:linear-gradient(#f6f6f6,#efefef);border-bottom:1.5px solid #cfcfcf"></div>
<svg class="a" style="left:0;top:0" width="280" height="1304">
 <g fill="none" stroke="#555" stroke-width="2">
  <path d="M18.5 130 L24 124.5 L46 124.5 L46 143 L40.5 148.5 L18.5 148.5 Z M18.5 130 H40.5 V148.5 M40.5 130 L46 124.5"/>
  <path d="M31 124.5 V131" stroke-width="1.5"/>
 </g>
 <path d="M22 145 Q27 139 38 139.5 L38 142 Q29 142 25 146 Z" fill="#4caf50"/>
 <g fill="none" stroke="#222" stroke-width="2.4">
  <path d="M225 124.5 l2.2 0.3 0.8 3 2.6 1.3 2.8-1.5 1.6 1.6-1.5 2.8 1.3 2.6 3 0.8 0.3 2.2-0.3 2.2-3 0.8-1.3 2.6 1.5 2.8-1.6 1.6-2.8-1.5-2.6 1.3-0.8 3-2.2 0.3-2.2-0.3-0.8-3-2.6-1.3-2.8 1.5-1.6-1.6 1.5-2.8-1.3-2.6-3-0.8-0.3-2.2 0.3-2.2 3-0.8 1.3-2.6-1.5-2.8 1.6-1.6 2.8 1.5 2.6-1.3 0.8-3 Z"/>
  <circle cx="225" cy="136.7" r="4.3"/>
 </g>
</svg>
<div class="t" style="left:67.5px;top:123.8px;font-size:25px;color:#262626;font-weight:normal;">Printer</div>
<!-- texture card -->
<div class="a" style="left:16px;top:173.5px;width:166px;height:171px;border:1.5px solid #ececec;border-radius:12px;background:#fff"></div>
<div class="a" style="left:62px;top:199px;width:76px;height:80px;background:linear-gradient(160deg,#cfb57a,#c3a567 60%,#c9ad70);border-radius:1px"></div>
<div class="a" style="left:72px;top:197px;width:14px;height:3px;background:#c9ad72"></div>
<div class="a" style="left:110px;top:197px;width:14px;height:3px;background:#c9ad72"></div>
<svg class="a" style="left:0;top:0" width="280" height="1304">
 <circle cx="155.5" cy="201.5" r="9.5" fill="none" stroke="#444" stroke-width="1.8"/>
 <path d="M155.5 197 v0.5 M153.5 200.5 h2 v6 M153 206.5 h5" stroke="#444" stroke-width="2" fill="none"/>
 <path d="M31 303 L40.5 309.5 L50 303" fill="none" stroke="#888" stroke-width="1.6"/>
</svg>
<div class="t" style="left:61.5px;top:295.8px;font-size:25px;color:#1f1f1f;font-weight:normal;">Texture...</div>
<!-- sync card -->
<div class="a" style="left:192px;top:173.5px;width:65.5px;height:171px;border:2px solid #4fae4f;border-radius:14px;background:#f6f6f6"></div>
<svg class="a" style="left:0;top:0" width="280" height="1304">
 <g fill="none" stroke="#45a34b" stroke-width="3.8">
  <path d="M209.5 214 A 18.5 18.5 0 0 1 242 224"/>
  <path d="M239 236 A 18.5 18.5 0 0 1 205.8 225"/>
 </g>
 <path d="M242 231.5 L251.5 217.5 L235 221 Z" fill="#45a34b"/>
 <path d="M205.5 219 L197.5 231.5 L213.5 229.5 Z" fill="#45a34b"/>
</svg>
<div class="t" style="left:204px;top:261.8px;font-size:25px;color:#111;font-weight:normal;">Syn</div>
<div class="t" style="left:204px;top:289.8px;font-size:25px;color:#111;font-weight:normal;">c ...</div>
<!-- nozzle card -->
<div class="a" style="left:7.5px;top:374px;width:250px;height:162.5px;border:1.5px solid #f0f0f0;border-radius:10px;background:#fafafa"></div>
<div class="a" style="left:29px;top:396px;width:164px;height:39px;background:#f4f4f4;border-radius:2px"></div>
<div class="t" style="left:33px;top:405.5px;font-size:23px;color:#838383;font-weight:normal;">Nozzle</div>
<div class="a" style="left:146px;top:456px;width:1px;height:46px;background:#efefef"></div>
<div class="t" style="left:33px;top:465.8px;font-size:25px;color:#2a2a2a;font-weight:normal;letter-spacing:0.3px">Diameter</div>
<div class="t" style="left:164.5px;top:466.7px;font-size:24px;color:#2a2a2a;font-weight:normal;">Flow</div>
<!-- project filaments -->
<div class="a" style="left:0;top:544px;width:265.5px;height:55.5px;background:linear-gradient(#f6f6f6,#efefef);border-top:1.5px solid #cfcfcf;border-bottom:1.5px solid #d2d2d2"></div>
<svg class="a" style="left:0;top:0" width="280" height="1304">
 <g fill="none" stroke-width="1.7">
  <ellipse cx="25" cy="571.5" rx="4" ry="11.5" stroke="#666"/>
  <ellipse cx="30.5" cy="571.5" rx="4" ry="11.5" stroke="#4fae4f"/>
  <ellipse cx="36" cy="571.5" rx="4" ry="11.5" stroke="#4fae4f"/>
  <ellipse cx="41" cy="571.5" rx="4" ry="11.5" stroke="#666"/>
 </g>
</svg>
<div class="t" style="left:67.5px;top:560.3px;font-size:25px;color:#262626;font-weight:normal;">Project Filaments</div>
<div class="a" style="left:18px;top:642px;width:35px;height:34.5px;border:1.5px solid #888;background:#fff"></div>
<div class="t" style="left:27.5px;top:649.8px;font-size:25px;color:#111;font-weight:normal;">1</div>
<div class="a" style="left:151px;top:642px;width:35px;height:34.5px;background:#7c7c7c"></div>
<div class="t" style="left:160.5px;top:649.8px;font-size:25px;color:#fff;font-weight:bold;">2</div>
<div class="a" style="left:18px;top:702px;width:35px;height:35px;background:#000"></div>
<div class="t" style="left:27.5px;top:709.8px;font-size:25px;color:#fff;font-weight:bold;">3</div>
<svg class="a" style="left:0;top:0" width="280" height="1304">
 <g fill="none" stroke="#111" stroke-width="2"><circle cx="90" cy="659" r="12"/><circle cx="223" cy="659" r="12"/><circle cx="90" cy="719.5" r="12"/></g>
 <g fill="#111"><circle cx="85.5" cy="659" r="1.4"/><circle cx="90" cy="659" r="1.4"/><circle cx="94.5" cy="659" r="1.4"/>
 <circle cx="218.5" cy="659" r="1.4"/><circle cx="223" cy="659" r="1.4"/><circle cx="227.5" cy="659" r="1.4"/>
 <circle cx="85.5" cy="719.5" r="1.4"/><circle cx="90" cy="719.5" r="1.4"/><circle cx="94.5" cy="719.5" r="1.4"/></g>
</svg>
<!-- process -->
<div class="a" style="left:0;top:777.5px;width:265.5px;height:56px;background:linear-gradient(#f6f6f6,#efefef);border-top:1.5px solid #cfcfcf;border-bottom:1.5px solid #d2d2d2"></div>
<div class="a" style="left:163px;top:787px;width:102.5px;height:38px;background:#d6d6d6"></div>
<div class="a" style="left:163px;top:788.5px;width:54.5px;height:35px;background:#4fae4f;border-radius:0 18px 18px 0"></div>
<svg class="a" style="left:0;top:0" width="280" height="1304">
 <g fill="none" stroke="#555" stroke-width="2" stroke-linejoin="round">
  <path d="M25 795 H46 L40 802 H19 Z"/>
  <path d="M19 811.5 L20.5 817.5 H40 L46 811"/>
 </g>
 <path d="M19.5 805 L20.5 808.5 H40 L46 803" fill="none" stroke="#4fae4f" stroke-width="2"/>
</svg>
<div class="t" style="left:67.5px;top:793.3px;font-size:25px;color:#262626;font-weight:normal;">Process</div>
<div class="t" style="left:163.5px;top:794.2px;font-size:24px;color:#fff;font-weight:normal;">obal</div>
<div class="t" style="left:221.5px;top:794.2px;font-size:24px;color:#6b6b6b;font-weight:normal;">Obje</div>
<svg class="a" style="left:0;top:0" width="280" height="1304">
 <path d="M42 878 A 10.5 10.5 0 1 0 31.5 888.5" fill="none" stroke="#d9785a" stroke-width="2"/>
 <path d="M37.5 877 L46.5 877 L42 884 Z" fill="#d9785a"/>
 <path d="M77 873.5 L86 880 L95.5 873.5" fill="none" stroke="#aaa" stroke-width="1.6"/>
 <g fill="none" stroke="#222" stroke-width="2" stroke-linejoin="round">
  <path d="M163.5 868.5 H178.5 L184 874 V888 H163.5 Z"/><path d="M168 868.5 V873.5 H175 V868.5"/><path d="M167.5 888 V881.5 H180 V888"/>
  <circle cx="220.5" cy="877.5" r="9.5"/><path d="M227.5 884.5 L237 893.5"/>
 </g>
</svg>
<div class="a" style="left:65px;top:857px;width:72px;height:42px;border:1.5px solid #d4d4d4;background:#fff"></div>
<svg class="a" style="left:0;top:0" width="280" height="1304">
 <path d="M77 873.5 L86 880 L95.5 873.5" fill="none" stroke="#aaa" stroke-width="1.6"/>
 <path d="M111.5 870.5 V879 M107.5 872.5 L115.5 877 M115.5 872.5 L107.5 877" stroke="#111" stroke-width="2"/>
 <g fill="#111"><circle cx="118.5" cy="886.5" r="1.7"/><circle cx="125" cy="886.5" r="1.7"/><circle cx="131.5" cy="886.5" r="1.7"/></g>
</svg>
<div class="t" style="left:26px;top:925.8px;font-size:25px;color:#dd7756;font-weight:bold;">Quality</div>
<div class="t" style="left:126.5px;top:925.8px;font-size:25px;color:#6b6b6b;font-weight:normal;letter-spacing:0.4px">Strength</div>
<div class="t" style="left:236px;top:925.8px;font-size:25px;color:#6b6b6b;font-weight:normal;">S..</div>
<div class="a" style="left:0;top:963px;width:265.5px;height:1.5px;background:#d6d6d6"></div>
<div class="a" style="left:19px;top:958.5px;width:97px;height:4.5px;border-radius:2px;background:#4fae4f"></div>
<svg class="a" style="left:0;top:0" width="280" height="1304">
 <g fill="none" stroke="#333" stroke-width="1.6">
  <path d="M31 1017.5 l2.2 0.4 0.6 2.6 2.2 1.1 2.4-1.3 1.5 1.5-1.3 2.4 1.1 2.2 2.6 0.6 0.4 2.2-0.4 2.2-2.6 0.6-1.1 2.2 1.3 2.4-1.5 1.5-2.4-1.3-2.2 1.1-0.6 2.6-2.2 0.4-2.2-0.4-0.6-2.6-2.2-1.1-2.4 1.3-1.5-1.5 1.3-2.4-1.1-2.2-2.6-0.6-0.4-2.2 0.4-2.2 2.6-0.6 1.1-2.2-1.3-2.4 1.5-1.5 2.4 1.3 2.2-1.1 0.6-2.6 Z"/>
  <path d="M41 1029.5 l1.6 2.2 2.6-0.6 0.4 2.7 2.5 1 -1.2 2.4 1.2 2.4 -2.5 1 -0.4 2.7 -2.6-0.6 -1.6 2.2 -1.6-2.2 -2.6 0.6 -0.4-2.7 -2.5-1 1.2-2.4 -1.2-2.4 2.5-1 0.4-2.7 2.6 0.6 Z" fill="#fff"/>
 </g>
 <circle cx="29.5" cy="1027.5" r="3.2" fill="#999"/>
 <path d="M187 1031 H238" stroke="#ececec" stroke-width="1.5"/>
</svg>
<div class="t" style="left:59.5px;top:1020.3px;font-size:25px;color:#1e1e1e;font-weight:bold;">Advanced</div>
<div class="t" style="left:54px;top:1074.8px;font-size:25px;color:#d9826a;font-weight:normal;letter-spacing:0.3px">Order of walls</div>
<div class="t" style="left:54px;top:1124.8px;font-size:25px;color:#262626;font-weight:normal;letter-spacing:0.3px">Print infill first</div>
<div class="t" style="left:54px;top:1174.5px;font-size:25px;color:#262626;font-weight:normal;letter-spacing:0.3px">Bridge flow</div>
<div class="t" style="left:54px;top:1223.8px;font-size:25px;color:#262626;font-weight:normal;letter-spacing:0.3px">Thick bridges</div>
<div class="t" style="left:54px;top:1273.8px;font-size:25px;color:#262626;font-weight:normal;">Only one wall on</div>
<div class="a" style="left:239px;top:977px;width:26.5px;height:327px;background:#f5f5f5;border-left:1.5px solid #e6e6e6"></div>
<div class="a" style="left:246.5px;top:1224px;width:13.5px;height:34.5px;border-radius:7px;background:#8a8a8a"></div>


<div class="a" style="left:0;top:0;width:2000px;height:44px;background:#2c2c2e"></div>
<div class="a" style="left:12px;top:8.5px;width:21px;height:21px;border-radius:50%;background:#ed6a5e"></div>
<div class="a" style="left:48px;top:8.5px;width:21px;height:21px;border-radius:50%;background:#f5bf4f"></div>
<div class="a" style="left:83px;top:8.5px;width:21px;height:21px;border-radius:50%;background:#62c554"></div>
<div class="t" style="left:759px;top:6.7px;font-size:24px;color:#fff;font-weight:bold;letter-spacing:-0.27px">SpeedBoatRace_Bambu Pla Basic_A1_Mini</div>


<div class="a" style="left:0;top:44px;width:2000px;height:64px;background:#3b4345"></div>
<div class="a" style="left:72px;top:44px;width:241px;height:64px;background:#50ae4f"></div>
<svg class="a" style="left:0;top:0" width="2000" height="108">
 <path d="M34 58.5 L51.5 76 L46 76 L46 94.5 L38 94.5 L38 82 L30 82 L30 94.5 L22 94.5 L22 76 L16.5 76 Z" fill="#fff"/>
 <g fill="none" stroke="#d9f5d6" stroke-width="2" stroke-linejoin="round">
  <path d="M140 63.5 L153 70.5 L153 83 L140 90 L127 83 L127 70.5 Z"/><path d="M127 70.5 L140 77 L153 70.5"/>
 </g>
 <g fill="none" stroke="#fff" stroke-width="2" stroke-linejoin="round">
  <path d="M380.5 63 L394.5 70.5 L380.5 78 L366.5 70.5 Z"/>
  <path d="M369 75 L366.5 76.5 L380.5 84 L394.5 76.5 L392 75"/>
  <path d="M369 81 L366.5 82.5 L380.5 90 L394.5 82.5 L392 81"/>
  <rect x="612.5" y="63.5" width="14" height="10" rx="1"/><path d="M619.5 73.5 V77 M615 77.5 H624"/>
  <path d="M634.5 63.5 H641 V70.5 M613 81 V89.5 H620.5"/>
  <rect x="629.5" y="76.5" width="12.5" height="13.5" rx="1"/><path d="M633 76.5 V81.5 H638.5 V76.5"/>
  <rect x="853" y="63.5" width="29" height="26" rx="1.5"/>
  <path d="M859.5 69 h1.5 M864.5 69 H876 M859.5 76.5 h1.5 M864.5 76.5 H876 M859.5 84 h1.5 M864.5 84 H876"/>
 </g>
 <g fill="none" stroke="#fff" stroke-width="2.2" stroke-linejoin="round">
  <path d="M1086 64 l3 3.5 l4.5 -1 l1 4.5 l4 2.2 l-2 4.2 l2 4.2 l-4 2.2 l-1 4.5 l-4.5 -1 l-3 3.5 l-3 -3.5 l-4.5 1 l-1 -4.5 l-4 -2.2 l2 -4.2 l-2 -4.2 l4 -2.2 l1 -4.5 l4.5 1 Z"/>
 </g>
 <path d="M1086 70.5 l5 5.5 h-3 v6 h-4 v-6 h-3 Z" fill="#fff"/>
 <rect x="1358.5" y="64" width="12" height="23.5" fill="#4caf50" stroke="#fff" stroke-width="1.6"/>
 <rect x="1370.5" y="76" width="11.5" height="11.5" fill="#4caf50" stroke="#fff" stroke-width="1.6"/>
 <rect x="1374" y="64" width="8.5" height="7.5" fill="#b57bf0"/>
 <rect x="1422.5" y="56.5" width="1.6" height="39" fill="#6a7072"/>
</svg>
<div class="t" style="left:173px;top:62.3px;font-size:25px;color:#ffffff;font-weight:normal;">Prepare</div>
<div class="t" style="left:414.5px;top:62.3px;font-size:25px;color:#ffffff;font-weight:normal;">Preview</div>
<div class="t" style="left:660.5px;top:62.3px;font-size:25px;color:#ffffff;font-weight:normal;">Device</div>
<div class="t" style="left:899.5px;top:61.9px;font-size:25.5px;color:#ffffff;font-weight:normal;">Project</div>
<div class="t" style="left:1119.5px;top:61.9px;font-size:25.5px;color:#ffffff;font-weight:normal;">Calibration</div>
<div class="a" style="left:1443px;top:55px;width:231px;height:41px;border-radius:21px;background:#6ed37d;overflow:hidden">
  <div class="a" style="left:0;top:0;width:42px;height:41px;background:#4fae4f"></div>
  <div class="a" style="left:42px;top:0;width:4.5px;height:41px;background:#2f5a33"></div>
</div>
<div class="a" style="left:1702px;top:55px;width:230px;height:41px;border-radius:21px;background:#6f6f6f;overflow:hidden">
  <div class="a" style="left:0;top:0;width:42px;height:41px;background:#4fae4f"></div>
  <div class="a" style="left:42px;top:0;width:4.5px;height:41px;background:#3e4443"></div>
</div>
<svg class="a" style="left:0;top:0" width="2000" height="108">
 <path d="M1460 73.5 L1468.5 79.5 L1477 73.5" fill="none" stroke="#e6f8e6" stroke-width="2.2"/>
 <path d="M1719 73.5 L1727.5 79.5 L1736 73.5" fill="none" stroke="#e6f8e6" stroke-width="2.2"/>
</svg>
<div class="t" style="left:1517px;top:62.8px;font-size:25px;color:#ffffff;font-weight:normal;">Slice plate</div>
<div class="t" style="left:1776px;top:62.4px;font-size:25.5px;color:#a9a9a9;font-weight:normal;">Print plate</div>

</body></html>
